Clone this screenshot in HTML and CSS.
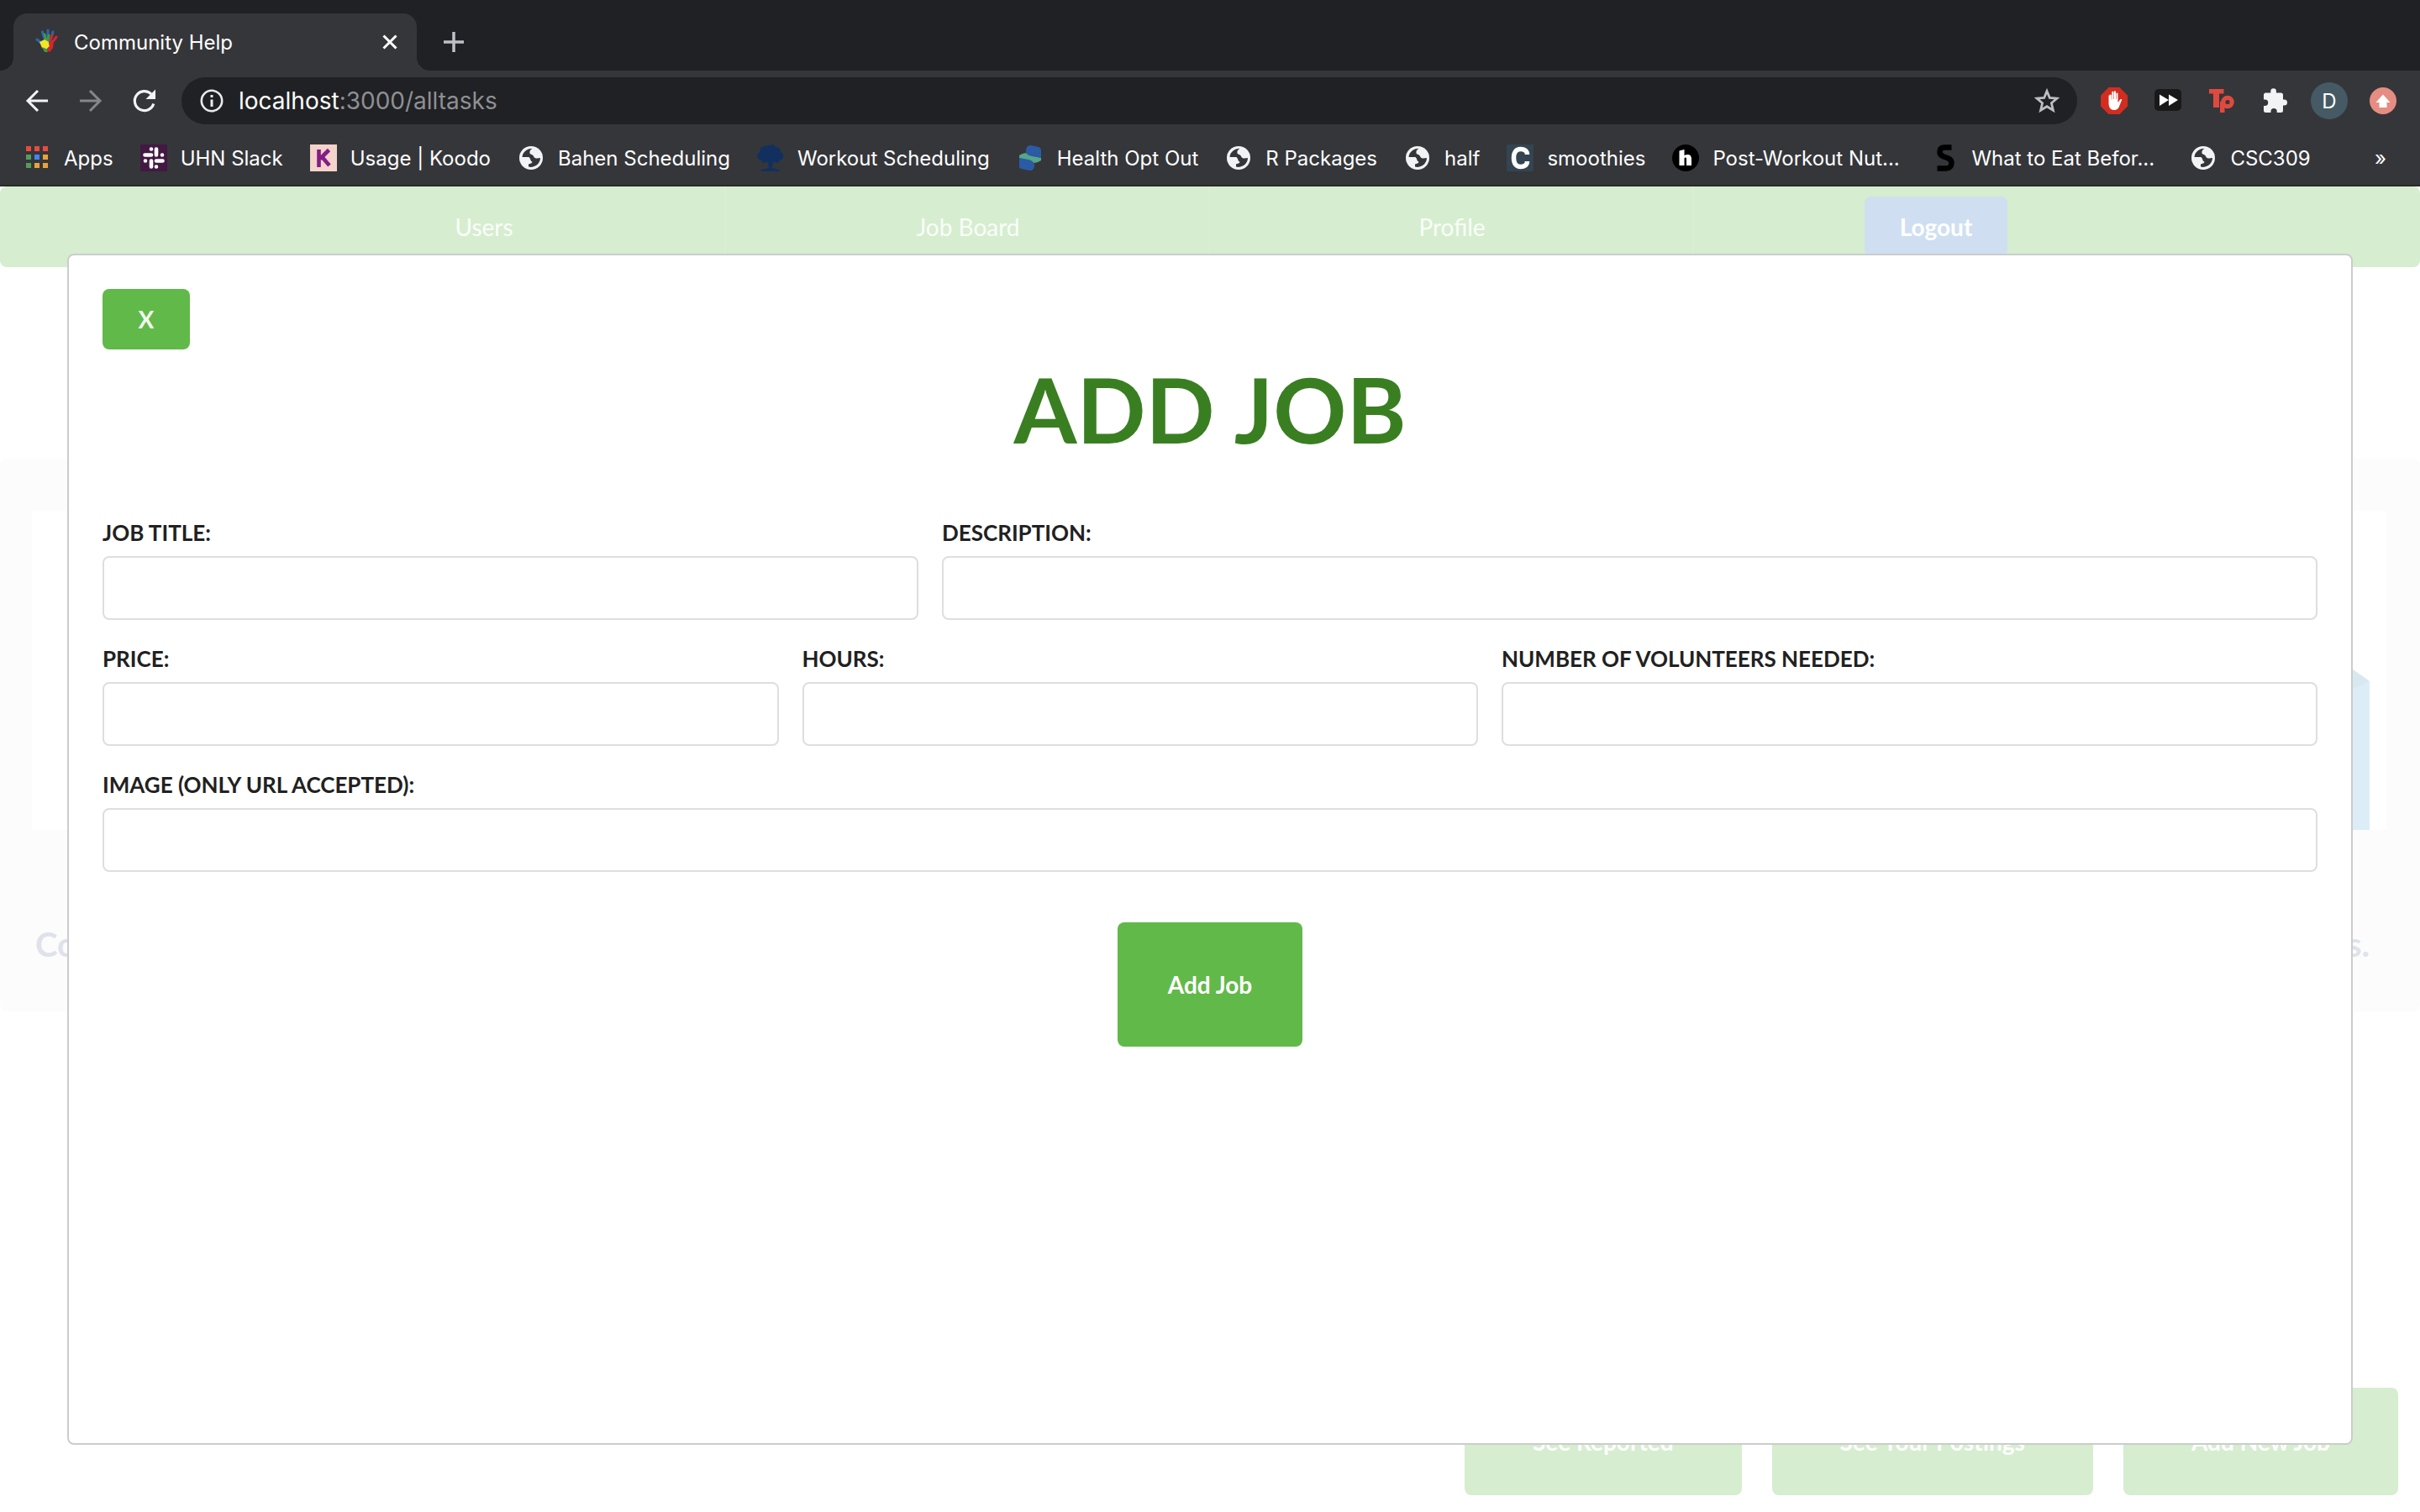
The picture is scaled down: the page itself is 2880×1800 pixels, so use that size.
FILE: index.html
```html
<!DOCTYPE html>
<html lang="en">
<head>
<meta charset="utf-8">
<title>Community Help</title>
<link rel="stylesheet" href="styles.css">
</head>
<body>
<svg class="sprite" aria-hidden="true">
  <symbol id="globe" viewBox="0 0 32 32">
    <circle cx="16" cy="16" r="14" fill="#f1f3f4"/>
    <path d="M5.500 15C6 9 11 5 17.500 4.800 15 6.500 14 8 14.500 10.500 15.500 12.500 18 11.500 19 14c.5 2 2.500 2.500 4 2.500l4-.5c0 5.500-4.500 10.500-11 11l-3-.5v-3c2-1 4-.5 4.500-3C15 20 16 17.500 13.500 15z" fill="#35363a"/>
  </symbol>
</svg>

<header class="browser">
  <div class="tabstrip">
    <div class="tab">
      <svg class="favicon" viewBox="0 0 32 32" aria-hidden="true">
        <g fill="none" stroke-linecap="round" stroke-width="3">
          <path d="M14 17 10.500 6M17 15V4" stroke="#2a66b0"/>
          <path d="M20 16 23 6" stroke="#2a66b0"/>
          <path d="M9 19 4 15" stroke="#2a66b0"/>
          <path d="M15 16 13 9M17 19 18 10" stroke="#3c9a4a"/>
          <path d="M21 20 27 12M20 15 22 10" stroke="#d3262f"/>
        </g>
        <path d="M7 18l6-3 5 3 1 5-4 4-5-2z" fill="#f3e528"/>
        <path d="M18 18l6-2-1 9-4 5-4-2 4-5z" fill="#d3262f"/>
        <path d="M10 24l5 2 2 4h-4z" fill="#3c9a4a"/>
      </svg>
      <span class="tab-title">Community Help</span>
      <button class="icon-button" aria-label="Close tab">
        <svg viewBox="0 0 32 32"><path d="M8.500 8.500l15 15m0-15l-15 15" stroke="#fff" stroke-width="3"/></svg>
      </button>
    </div>
    <button class="icon-button new-tab" aria-label="New tab">
      <svg viewBox="0 0 32 32"><path d="M16 4v24M4 16h24" stroke="#bdc1c6" stroke-width="3.500"/></svg>
    </button>
  </div>

  <div class="toolbar">
    <button class="icon-button" aria-label="Back">
      <svg viewBox="0 0 32 32"><path d="M29 16H5M17 4 5 16l12 12" fill="none" stroke="#f1f3f4" stroke-width="3"/></svg>
    </button>
    <button class="icon-button" aria-label="Forward">
      <svg viewBox="0 0 32 32"><path d="M3 16h24M15 4l12 12-12 12" fill="none" stroke="#85868a" stroke-width="3"/></svg>
    </button>
    <button class="icon-button" aria-label="Reload">
      <svg viewBox="0 0 32 32"><path d="M26.800 19.500A11.500 11.500 0 1 1 24 8" fill="none" stroke="#f1f3f4" stroke-width="3.200"/><path d="M29 2.500V14H17.500z" fill="#f1f3f4"/></svg>
    </button>
    <div class="omnibox">
      <svg class="icon" viewBox="0 0 32 32" aria-hidden="true"><circle cx="16" cy="16" r="12.200" fill="none" stroke="#e8eaed" stroke-width="2.600"/><path d="M16 14.500V23M16 9v3" stroke="#e8eaed" stroke-width="3"/></svg>
      <span class="url">localhost<span class="url-rest">:3000/alltasks</span></span>
      <button class="icon-button" aria-label="Bookmark this page">
        <svg viewBox="0 0 32 32"><path d="M16 4.500l3.300 8 8.600.7-6.500 5.600 2 8.400L16 22.700l-7.400 4.500 2-8.400-6.500-5.600 8.600-.7z" fill="none" stroke="#bdbec0" stroke-width="2.800"/></svg>
      </button>
    </div>
    <button class="icon-button" aria-label="Ad blocker">
      <svg viewBox="0 0 32 32"><path d="M9.500 0h13L32 9.500v13L22.500 32h-13L0 22.500v-13z" fill="#d22d20"/><path d="M9.500 9.500v9c0 5 2 8.500 6.500 8.500 4 0 5.500-2.500 6.500-5.500l2.800-7c-1.500-1-2.500 0-3.500 2l-1.300 1.500V7.500c0-1.500-2-1.500-2 0V14h-.5V5.500c0-1.700-2.200-1.700-2.200 0V14h-.5V6c0-1.600-2-1.600-2 0v8.500h-.5v-5c0-1.500-2.300-1.500-2.300 0z" fill="#fff"/></svg>
    </button>
    <button class="icon-button" aria-label="Speed control">
      <svg viewBox="0 0 32 32"><rect y="2" width="32" height="26" rx="5" fill="#191919"/><path d="M6 8.500 17 15 6 22zM17 8.500 28 15l-11 7z" fill="#fff"/></svg>
    </button>
    <button class="icon-button" aria-label="Toolkit">
      <svg viewBox="0 0 32 32"><path d="M1 2h17.500v5.500H13V24H6V7.500H1z" fill="#df4a3f"/><path d="M14 17h5.500v13H14z" fill="#df4a3f"/><circle cx="23" cy="17.500" r="5.200" fill="none" stroke="#df4a3f" stroke-width="5.200"/></svg>
    </button>
    <button class="icon-button" aria-label="Extensions">
      <svg viewBox="0 0 32 32"><path d="M10.300 6.500V4.500a3.300 3.300 0 0 1 6.600 0v2h5.600A2.500 2.500 0 0 1 25 9v5.500h1.500a3.500 3.500 0 0 1 0 7H25v6a2.500 2.500 0 0 1-2.500 2.500h-4.800v-1.500a3.600 3.600 0 0 0-7.200 0V30h-6A2.500 2.500 0 0 1 2 27.500V22h1.500a3.700 3.700 0 0 0 0-7.400H2V9a2.500 2.500 0 0 1 2.500-2.500z" fill="#f1f3f4"/></svg>
    </button>
    <button class="avatar" aria-label="Profile D">D</button>
    <button class="icon-button" aria-label="Update available">
      <svg viewBox="0 0 32 32"><circle cx="16" cy="16" r="16" fill="#e58d82"/><path d="M16 8.500l8.500 9.500h-4v6h-9v-6h-4z" fill="#fff"/></svg>
    </button>
  </div>

  <nav class="bookmarks" aria-label="Bookmarks">
    <a class="bookmark" href="#">
      <svg class="icon" viewBox="0 0 32 32" aria-hidden="true"><g fill="#ea4b3d"><path d="M3 2h6v6H3zM13 2h6v6h-6zM23 2h6v6h-6z"/></g><path d="M3 12h6v6H3zM3 22h6v6H3z" fill="#549e5b"/><path d="M13 12h6v6h-6z" fill="#4087f0"/><path d="M23 12h6v6h-6zM13 22h6v6h-6zM23 22h6v6h-6z" fill="#e8a33a"/></svg>
      <span>Apps</span></a>
    <a class="bookmark" href="#">
      <svg class="icon" viewBox="0 0 32 32" aria-hidden="true"><path d="M0 0h32v32H0z" fill="#431843"/><path d="M13 5.500v0M13 12.500H5.500M19 5.500V12.500M26 12.500v0M19 19.500h7.500M19 26.500v0M13 19.500v7M6 19.500v0" stroke="#fff" stroke-width="4.600" stroke-linecap="round"/></svg>
      <span>UHN Slack</span></a>
    <a class="bookmark" href="#">
      <svg class="icon" viewBox="0 0 32 32" aria-hidden="true"><path d="M0 0h32v32H0z" fill="#f4d3cb"/><path d="M10.500 6v21M22.500 6.500 12 17M14 14.500 23 25" stroke="#821e85" stroke-width="4.600" fill="none"/></svg>
      <span>Usage | Koodo</span></a>
    <a class="bookmark" href="#"><svg class="icon" aria-hidden="true"><use href="#globe"/></svg><span>Bahen Scheduling</span></a>
    <a class="bookmark" href="#">
      <svg class="icon" viewBox="0 0 32 32" aria-hidden="true"><path d="M13 1l7-1 2 3 5 1 1 5 3 2v6l-4 2-2 3-6-1-1 7 9 2v2H5v-2l9-2-1-7-6 1-2-3-4-2-1-5 3-3 1-5 5-2z" fill="#12305f"/></svg>
      <span>Workout Scheduling</span></a>
    <a class="bookmark" href="#">
      <svg class="icon" viewBox="0 0 32 32" aria-hidden="true"><path d="M3 13c3-2 6-3 9-3l17 6v3c-3 2-6 3-9 3L3 16z" fill="#55a68b"/><path d="M11 8c0-5 2-7 6-7l9 2c2 1 3 2 3 4v9l-11-2c-5-1-7-3-7-6zM3 16l11 2c4 1 7 3 7 7 0 4-2 6-6 6l-9-2c-2 0-3-1-3-3z" fill="#2b5ba4"/></svg>
      <span>Health Opt Out</span></a>
    <a class="bookmark" href="#"><svg class="icon" aria-hidden="true"><use href="#globe"/></svg><span>R Packages</span></a>
    <a class="bookmark" href="#"><svg class="icon" aria-hidden="true"><use href="#globe"/></svg><span>half</span></a>
    <a class="bookmark" href="#">
      <svg class="icon" viewBox="0 0 32 32" aria-hidden="true"><path d="M0 0h32v32H0z" fill="#344451"/><path d="M24.500 12c0-4-3-6.500-8-6.500S8.500 9 8.500 16s3 10.500 8 10.500 8-2.500 8-6.500" fill="none" stroke="#fff" stroke-width="5.500"/></svg>
      <span>smoothies</span></a>
    <a class="bookmark bookmark-long" href="#">
      <svg class="icon" viewBox="0 0 32 32" aria-hidden="true"><circle cx="16" cy="16" r="16" fill="#000"/><path d="M8.500 7.500l6-1.500v7c5-2.500 8.500-.5 8.500 4v8h-6v-8c0-2-2.500-2-2.500 0v8h-6v-15z" fill="#fff"/></svg>
      <span>Post-Workout Nut...</span></a>
    <a class="bookmark bookmark-long" href="#">
      <svg class="icon" viewBox="0 0 32 32" aria-hidden="true"><path d="M24.500 3.500H16c-4 0-5.500 2-5.500 5.500 0 8 14 4.500 14 13 0 4-2.500 6.500-6.500 6.500H7.500" fill="none" stroke="#000" stroke-width="6.500"/></svg>
      <span>What to Eat Befor...</span></a>
    <a class="bookmark" href="#"><svg class="icon" aria-hidden="true"><use href="#globe"/></svg><span>CSC309</span></a>
    <button class="more" aria-label="More bookmarks">»</button>
  </nav>
</header>

<div class="page">
  <nav class="menu" aria-label="Main">
    <a class="menu-item" href="#">Users</a>
    <a class="menu-item" href="#">Job Board</a>
    <a class="menu-item" href="#">Profile</a>
    <div class="menu-item"><button class="logout">Logout</button></div>
  </nav>

  <section class="segment">
    <div class="banner">
      <svg class="banner-art" viewBox="0 0 60 192" aria-hidden="true"><path d="M0 0l40 1 20 14v177H0z" fill="#dcedf7"/><path d="M40 1l20 14-20 9-30 10z" fill="#d8e8f0"/></svg>
    </div>
    <h2 class="tagline"><span>Co</span><span>s.</span></h2>
  </section>

  <div class="actions">
    <button class="action">See Reported</button>
    <button class="action">See Your Postings</button>
    <button class="action">Add New Job</button>
  </div>

  <div class="modal" role="dialog" aria-labelledby="modal-title">
    <button class="button close" aria-label="Close">X</button>
    <h1 class="modal-title" id="modal-title">ADD JOB</h1>
    <form class="form">
      <div class="field span-6"><label for="title">JOB TITLE:</label><input id="title" type="text"></div>
      <div class="field span-10"><label for="description">DESCRIPTION:</label><input id="description" type="text"></div>
      <div class="field span-5"><label for="price">PRICE:</label><input id="price" type="text"></div>
      <div class="field span-5"><label for="hours">HOURS:</label><input id="hours" type="text"></div>
      <div class="field span-6"><label for="volunteers">NUMBER OF VOLUNTEERS NEEDED:</label><input id="volunteers" type="text"></div>
      <div class="field span-16"><label for="image">IMAGE (ONLY URL ACCEPTED):</label><input id="image" type="text"></div>
      <button class="button submit" type="button">Add Job</button>
    </form>
  </div>
</div>
</body>
</html>
```

FILE: styles.css
```css
* { box-sizing: border-box; }

body {
  margin: 0;
  min-height: 100vh;
  display: flex;
  flex-direction: column;
  background: #fff;
  font-family: Lato, sans-serif;
  font-size: 28px;
}

button { border: 0; padding: 0; font: inherit; cursor: pointer; }
a { color: inherit; text-decoration: none; }
svg { display: block; }
.sprite { position: absolute; width: 0; height: 0; }

/* Browser window */
.browser {
  background: #35363a;
  border-bottom: 2px solid #2a2a26;
  color: #fff;
  font-family: Inter, sans-serif;
  font-size: 24px;
}

.icon,
.icon-button,
.icon-button svg { width: 32px; height: 32px; flex: none; }
.icon-button { background: none; }

.tabstrip {
  display: flex;
  align-items: flex-end;
  height: 84px;
  padding-left: 16px;
  background: #202124;
}

.tab {
  position: relative;
  display: flex;
  align-items: center;
  width: 480px;
  height: 68px;
  padding: 0 16px 0 24px;
  border-radius: 16px 16px 0 0;
  background: #35363a;
}

/* Flared feet of the active tab */
.tab::before,
.tab::after {
  content: "";
  position: absolute;
  bottom: 0;
  width: 16px;
  height: 16px;
}
.tab::before { left: -16px; background: radial-gradient(circle at 0 0, transparent 16px, #35363a 16px); }
.tab::after { right: -16px; background: radial-gradient(circle at 100% 0, transparent 16px, #35363a 16px); }

.favicon { width: 32px; height: 32px; margin-top: -4px; }
.tab-title { flex: 1; padding-left: 16px; }
.new-tab { margin: 0 0 18px 28px; }

.toolbar {
  display: flex;
  align-items: center;
  gap: 32px;
  height: 72px;
  padding: 0 28px;
}

.omnibox {
  flex: 1;
  display: flex;
  align-items: center;
  gap: 16px;
  height: 56px;
  margin: 0 -4px;
  padding: 0 20px;
  border-radius: 28px;
  background: #202124;
  font-size: 28px;
}
.url { flex: 1; }
.url-rest { color: #8f9093; }

.avatar {
  width: 44px;
  height: 44px;
  margin: 0 -6px;
  border-radius: 50%;
  background: #455a64;
  color: #fff;
}

.bookmarks {
  display: flex;
  align-items: center;
  gap: 32px;
  height: 64px;
  padding: 0 40px 0 28px;
  white-space: nowrap;
}
.bookmark { display: flex; align-items: center; gap: 16px; }
.bookmark-long { width: 276px; }
.more { margin-left: auto; background: none; color: #fff; }

/* Page behind the dialog */
.page {
  position: relative;
  flex: 1;
  display: flex;
  flex-direction: column;
}

.menu {
  display: flex;
  justify-content: center;
  height: 96px;
  border-radius: 8px;
  background: #d6edd0;
  color: #fafdf9;
}
.menu-item {
  display: flex;
  align-items: center;
  justify-content: center;
  width: 20%;
}
.menu-item:not(:last-child) { box-shadow: inset -2px 0 #d9eed4; }
.logout {
  height: 72px;
  padding: 0 42px;
  border-radius: 8px;
  background: #cfdff1;
  color: #fff;
  font-weight: 700;
}

.segment {
  margin-top: 228px;
  padding: 62px 40px 56px 38px;
  border-radius: 8px;
  background: #fcfcfd;
}
.banner {
  display: flex;
  justify-content: flex-end;
  align-items: flex-end;
  height: 380px;
  padding-right: 20px;
  background: #fff;
}
.banner-art { width: 60px; height: 192px; }
.tagline {
  display: flex;
  justify-content: space-between;
  margin: 112px 20px 0 4px;
  color: #dfe2e9;
  font-size: 40px;
  line-height: 48px;
}

.actions {
  display: flex;
  justify-content: flex-end;
  gap: 36px;
  margin-top: auto;
  padding: 0 26px 20px;
}
.action {
  height: 128px;
  padding: 0 81px;
  border-radius: 8px;
  background: #d6edd0;
  color: #fff;
  font-weight: 700;
}

/* Add job dialog */
.modal {
  position: absolute;
  inset: 80px;
  padding: 40px;
  border: 2px solid #ccc;
  border-radius: 8px;
  background: #fff;
}
.button {
  border-radius: 8px;
  background: #61b94a;
  color: #fff;
  font-weight: 700;
}
.close { display: block; width: 104px; height: 72px; color: #f3f8f0; }
.submit {
  grid-column: 1 / -1;
  justify-self: center;
  width: 220px;
  height: 148px;
  margin-top: 32px;
}
.modal-title {
  margin: 0 0 60px;
  color: #397f22;
  font-size: 108px;
  line-height: 140px;
  text-align: center;
}

.form {
  display: grid;
  grid-template-columns: repeat(16, 1fr);
  gap: 28px;
}
.field { display: flex; flex-direction: column; gap: 10px; }
.field label {
  color: #212121;
  font-size: 26px;
  font-weight: 700;
  line-height: 36px;
}
.field input {
  width: 100%;
  height: 76px;
  padding: 0 28px;
  border: 2px solid #dededf;
  border-radius: 8px;
  background: #fff;
  font: inherit;
}
.span-5 { grid-column: span 5; }
.span-6 { grid-column: span 6; }
.span-10 { grid-column: span 10; }
.span-16 { grid-column: span 16; }
```
